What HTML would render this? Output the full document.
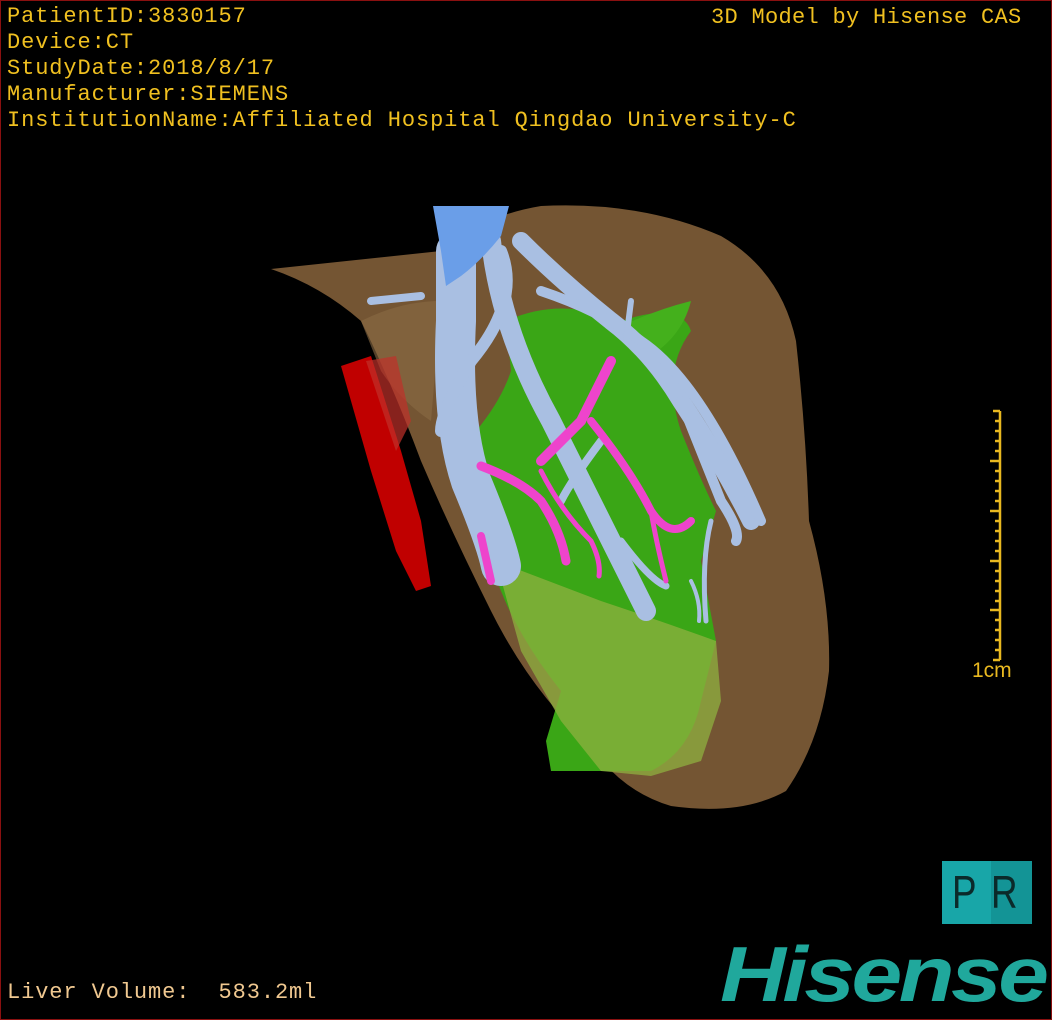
<!DOCTYPE html><html><head><style>
html,body{margin:0;padding:0;background:#000;}
#c{position:relative;width:1050px;height:1018px;border:1px solid #8a1010;overflow:hidden;background:#000;font-family:"Liberation Sans","Noto Sans CJK SC",sans-serif;}
.t{position:absolute;left:6px;color:#f0c020;font-family:"Liberation Mono",monospace;font-size:22px;line-height:26px;white-space:pre;letter-spacing:0.9px}
</style></head><body><div id="c">
<svg width="1050" height="1018" style="position:absolute;left:0;top:0">
<path d="M270,268 L440,250 Q480,215 540,205 Q640,200 720,235 Q780,270 795,340 Q805,430 808,520 Q830,600 828,670 Q820,740 785,790 Q740,815 670,805 Q620,790 590,745 Q530,690 490,610 Q450,530 420,460 Q390,380 360,320 Q320,285 270,268Z" fill="#7a5a36" opacity="0.95"/>
<path d="M360,320 Q400,300 440,300 L430,420 Q400,400 380,370Z" fill="#8a6a44" opacity="0.6"/>
<path d="M340,365 L370,355 L400,450 L420,520 L430,585 L415,590 L395,550 L370,470Z" fill="#c00000"/>
<path d="M365,360 L395,355 L410,420 L395,450Z" fill="#c0302a" opacity="0.7"/>
<path d="M505,320 Q560,295 620,320 Q680,300 690,330 Q660,370 680,430 Q700,480 715,510 L700,560 L715,640 L700,700 Q690,750 650,770 L550,770 L545,740 L560,690 Q520,640 500,590 Q480,540 470,500 Q460,440 475,430 Q500,400 510,370Z" fill="#3aa616"/>
<path d="M610,330 Q650,310 690,300 Q680,340 640,360Z" fill="#44b01c"/>
<path d="M495,560 L600,600 Q660,620 715,640 L720,700 L700,760 L650,775 L600,770 L560,720 L520,650Z" fill="#8fb040" opacity="0.75"/>
<g stroke="#a9bfe2" fill="none" stroke-linecap="round">
<path d="M455,250 L455,320 Q450,420 470,480 Q495,540 500,565" stroke-width="40"/>
<path d="M490,240 Q500,330 550,420 Q600,520 645,610" stroke-width="20"/>
<path d="M500,250 Q520,300 470,360 Q440,410 440,430" stroke-width="12"/>
<path d="M520,240 Q560,280 610,320 Q650,350 680,400 Q720,460 750,520" stroke-width="18"/>
<path d="M540,290 Q600,310 640,340 Q700,380 760,520" stroke-width="10"/>
<path d="M680,400 Q700,450 720,500 Q740,530 735,540" stroke-width="10"/>
<path d="M600,440 Q570,480 560,500" stroke-width="8"/>
<path d="M620,540 Q650,580 665,585" stroke-width="7"/>
<path d="M370,300 L420,295" stroke-width="8"/>
<path d="M630,300 L625,340" stroke-width="6"/>
<path d="M710,520 Q700,560 705,620" stroke-width="5"/>
<path d="M690,580 Q700,600 698,620" stroke-width="4"/>
</g>
<path d="M432,205 L508,205 L500,235 Q480,260 460,275 L445,285 L440,250 Z" fill="#6a9ee8"/>
<g stroke="#ee44cc" fill="none" stroke-linecap="round">
<path d="M610,360 Q590,400 580,420 Q560,440 540,460" stroke-width="10"/>
<path d="M590,420 Q630,470 650,510 Q670,540 690,520" stroke-width="8"/>
<path d="M650,510 Q655,540 665,580" stroke-width="5"/>
<path d="M480,465 Q520,480 540,500 Q560,530 565,560" stroke-width="9"/>
<path d="M540,470 Q560,510 590,540 Q600,560 598,575" stroke-width="5"/>
<path d="M480,535 L490,580" stroke-width="8"/>
</g>
</svg>
<div class="t" style="top:3px">PatientID:3830157</div>
<div class="t" style="top:29px">Device:CT</div>
<div class="t" style="top:55px">StudyDate:2018/8/17</div>
<div class="t" style="top:81px">Manufacturer:SIEMENS</div>
<div class="t" style="top:107px">InstitutionName:Affiliated Hospital Qingdao University-C</div>
<div class="t" style="top:4px;left:710px;letter-spacing:0.3px">3D Model by Hisense CAS</div>
<svg width="20" height="255" style="position:absolute;left:986px;top:408px">
<g stroke="#e8b820" stroke-width="2.5">
<line x1="13" y1="2" x2="13" y2="251"/>
<line x1="6" y1="2" x2="13" y2="2"/><line x1="6" y1="251" x2="13" y2="251"/>
<line x1="3" y1="52" x2="13" y2="52"/><line x1="3" y1="102" x2="13" y2="102"/><line x1="3" y1="152" x2="13" y2="152"/><line x1="3" y1="201" x2="13" y2="201"/>
<path d="M8,12h5M8,22h5M8,32h5M8,42h5M8,62h5M8,72h5M8,82h5M8,92h5M8,112h5M8,122h5M8,132h5M8,142h5M8,162h5M8,172h5M8,182h5M8,192h5M8,211h5M8,221h5M8,231h5M8,241h5"/>
</g></svg>
<div style="position:absolute;left:971px;top:658px;color:#e8b820;font-size:21px">1cm</div>
<div style="position:absolute;left:941px;top:860px;width:90px;height:63px;background:#18a6a8;">
<div style="position:absolute;left:49px;top:0;width:41px;height:63px;background:#139496"></div>
<div style="position:absolute;left:10px;top:4px;font-size:46px;color:#0b2a2a;letter-spacing:18px;transform:scaleX(0.8);transform-origin:left">PR</div></div>
<div style="position:absolute;left:719px;top:933px;font-size:78px;font-weight:bold;font-style:italic;color:#20a89c;letter-spacing:-3px;line-height:80px;transform:scaleX(1.17);transform-origin:left">Hisense</div>
<div class="t" style="top:979px;color:#f0c890">Liver Volume:  583.2ml</div>
</div></body></html>
